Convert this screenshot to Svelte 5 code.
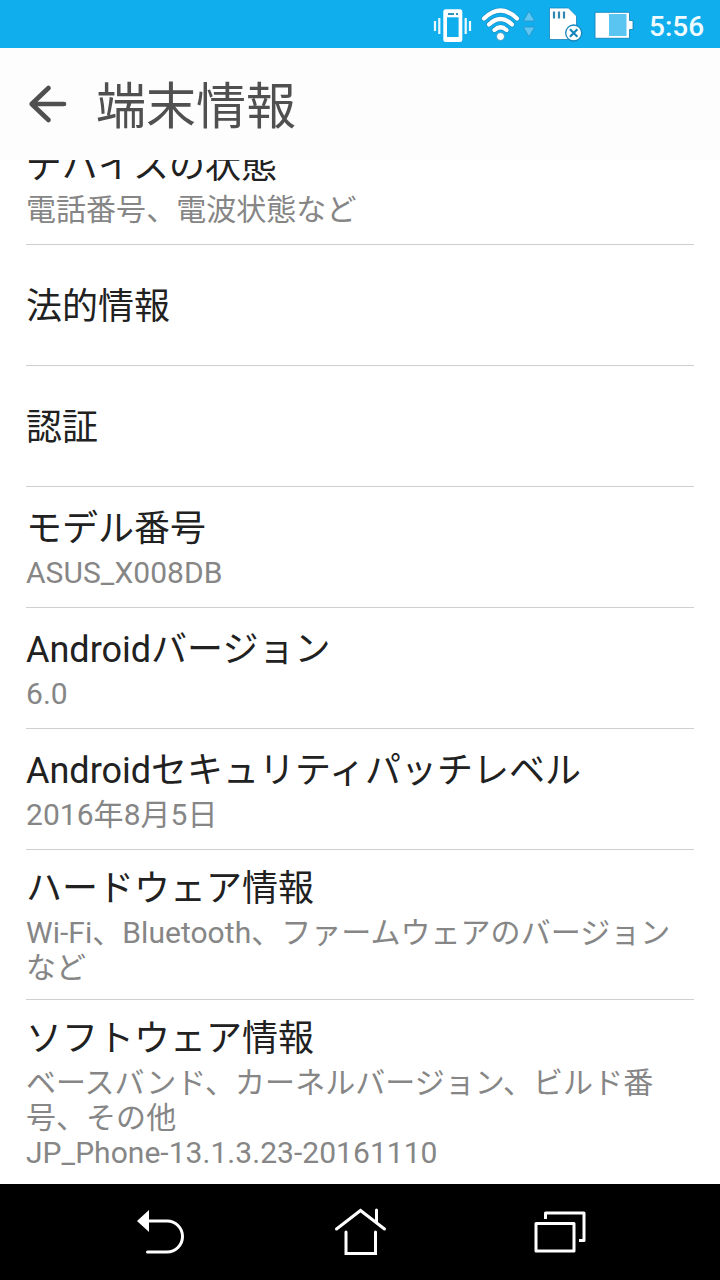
<script lang="ts">
	interface Setting {
		title: string;
		summary?: string[];
	}

	const time = '5:56';
	const pageTitle = '端末情報';

	const settings: Setting[] = [
		{ title: 'デバイスの状態', summary: ['電話番号、電波状態など'] },
		{ title: '法的情報' },
		{ title: '認証' },
		{ title: 'モデル番号', summary: ['ASUS_X008DB'] },
		{ title: 'Androidバージョン', summary: ['6.0'] },
		{ title: 'Androidセキュリティパッチレベル', summary: ['2016年8月5日'] },
		{
			title: 'ハードウェア情報',
			summary: ['Wi-Fi、Bluetooth、ファームウェアのバージョン', 'など']
		},
		{
			title: 'ソフトウェア情報',
			summary: [
				'ベースバンド、カーネルバージョン、ビルド番',
				'号、その他',
				'JP_Phone-13.1.3.23-20161110'
			]
		}
	];

	const wifiArcs =
		'M484 18.5Q500.500 2.500 517 18.500M489 24.500Q500.500 13.500 512 24.500M494.500 30Q500.500 24.500 506.500 30';
</script>

<div class="screen">
	<div class="status-bar">
		<!-- vibrate -->
		<svg class="vibrate" width="40" height="48" viewBox="432 0 40 48">
			<path
				d="M435 21v10M439.3 18v16M465.7 18v16M470 21v10"
				stroke="#effaff"
				stroke-width="2.2"
				fill="none"
			/>
			<rect x="443.3" y="9.3" width="19" height="32.8" rx="2.5" fill="#fff" />
			<rect x="447" y="17.3" width="11.600" height="19.700" fill="#10aeed" />
			<path d="M448 14h6M456 14h2" stroke="#3191bd" stroke-width="1.8" />
		</svg>

		<!-- wifi -->
		<svg class="wifi" width="42" height="48" viewBox="480 0 42 48">
			<g fill="none" stroke-linecap="round">
				<path d={wifiArcs} stroke="#1685bb" stroke-width="5.2" />
				<path d={wifiArcs} stroke="#fff" stroke-width="4.2" />
			</g>
			<circle cx="500.5" cy="36.5" r="4" fill="#fff" stroke="#1685bb" stroke-width=".7" />
		</svg>

		<!-- data activity -->
		<svg class="activity" width="14" height="48" viewBox="522 0 14 48">
			<path
				d="M529 11.300L534.700 21H523.300ZM529 36.700L534.700 27H523.300Z"
				fill="#5fc5f2"
				stroke="#2798cb"
				stroke-width=".9"
				stroke-linejoin="round"
			/>
		</svg>

		<!-- sd card removed -->
		<svg class="sd-card" width="36" height="48" viewBox="547 0 36 48">
			<path
				d="M549.500 8H568.500L576.500 16V39.500H549.500Z"
				fill="#fff"
				stroke="#1685bb"
				stroke-width=".8"
			/>
			<path d="M554 11.500V18.500M559 11.500V18.500M564 11.500V18.500" stroke="#2f88b2" stroke-width="2.200" />
			<circle cx="573.700" cy="33" r="8" fill="#fff" stroke="#1685bb" stroke-width="1.300" />
			<path d="M570 29.300L577.400 36.700M577.400 29.300L570 36.700" stroke="#1685bb" stroke-width="2.200" />
		</svg>

		<svg class="battery" width="40" height="48" viewBox="594 0 40 48">
			<path
				d="M595 12.300H629.500V20.500H633V29.500H629.500V38.300H595Z"
				fill="#fff"
				stroke="#1685bb"
				stroke-width=".9"
			/>
			<rect x="609" y="14" width="17.500" height="22" fill="#5bc5f2" />
		</svg>

		<span class="time">{time}</span>
	</div>

	<header class="header">
		<svg width="40" height="40" viewBox="28 84 40 40">
			<path
				d="M48.500 88L31.700 104L48.500 120M31.700 104H64"
				fill="none"
				stroke="#505050"
				stroke-width="4.700"
				stroke-linecap="round"
				stroke-linejoin="round"
			/>
		</svg>
		<h1>{pageTitle}</h1>
	</header>

	<main class="content">
		<div class="list">
			{#each settings as setting}
				<div class="item">
					<div class="item-title">{setting.title}</div>
					{#if setting.summary}
						<div class="item-summary">
							{#each setting.summary as line}
								<div>{line}</div>
							{/each}
						</div>
					{/if}
				</div>
			{/each}
		</div>
	</main>

	<nav class="nav-bar">
		<svg width="60" height="60" viewBox="130 1202 60 60">
			<path d="M137 1221L149 1210V1232Z" fill="#fff" />
			<path
				d="M148 1221H167A15.500 15.500 0 0 1 167 1252H147.500"
				fill="none"
				stroke="#fff"
				stroke-width="3"
				stroke-linecap="round"
			/>
		</svg>
		<svg width="60" height="60" viewBox="330 1202 60 60">
			<path
				d="M336.500 1229L360.500 1210.500L384.500 1229M376.500 1222V1210M346 1232V1253.500H375.500V1232"
				fill="none"
				stroke="#fff"
				stroke-width="3"
				stroke-linecap="round"
			/>
		</svg>
		<svg width="60" height="60" viewBox="530 1202 60 60">
			<rect
				x="536"
				y="1223.500"
				width="38"
				height="27.500"
				fill="none"
				stroke="#fff"
				stroke-width="3"
				stroke-linejoin="round"
			/>
			<path
				d="M545.500 1219V1213H584V1240.500H579"
				fill="none"
				stroke="#fff"
				stroke-width="3"
				stroke-linejoin="round"
			/>
		</svg>
	</nav>
</div>

<style>
	:global(body) {
		margin: 0;
	}

	.screen {
		display: flex;
		flex-direction: column;
		width: 720px;
		height: 1280px;
		overflow: hidden;
		background: #fff;
		font-family: Roboto, 'Noto Sans CJK JP', sans-serif;
	}

	svg {
		display: block;
		flex: none;
	}

	.status-bar {
		display: flex;
		flex: none;
		justify-content: flex-end;
		align-items: center;
		height: 48px;
		padding-right: 16px;
		box-sizing: border-box;
		background: #10aeed;
	}

	.wifi {
		margin-left: 8px;
	}

	.sd-card {
		margin-left: 11px;
	}

	.battery {
		margin-left: 11px;
	}

	.time {
		width: 55px;
		margin-left: 15px;
		padding-top: 6px;
		color: #f0fbff;
		font-size: 28px;
		font-weight: 500;
		line-height: 34px;
		white-space: nowrap;
	}

	.header {
		display: flex;
		flex: none;
		align-items: center;
		gap: 28px;
		height: 112px;
		padding-left: 28px;
		background: #fdfdfd;
	}

	.header h1 {
		margin: 0;
		padding-top: 6px;
		color: #505050;
		font-size: 50px;
		font-weight: 400;
		line-height: 60px;
	}

	.content {
		flex: 1;
		min-height: 0;
		overflow: hidden;
	}

	/* scrolled so the first row slides under the header */
	.list {
		margin-top: -36px;
		padding: 0 26px;
	}

	.item {
		display: flex;
		flex-direction: column;
		justify-content: center;
		box-sizing: border-box;
		min-height: 121px;
		padding: 18px 0 14px;
		border-bottom: 1px solid #cfcfcf;
	}

	.item-title {
		color: #212121;
		font-size: 36px;
		line-height: 42px;
		white-space: nowrap;
	}

	.item-summary {
		margin-top: 5px;
		color: #868686;
		font-size: 30px;
		letter-spacing: 0.04px;
		line-height: 35px;
		white-space: nowrap;
	}

	.nav-bar {
		display: flex;
		flex: none;
		align-items: center;
		justify-content: center;
		gap: 140px;
		height: 96px;
		background: #000;
	}
</style>
